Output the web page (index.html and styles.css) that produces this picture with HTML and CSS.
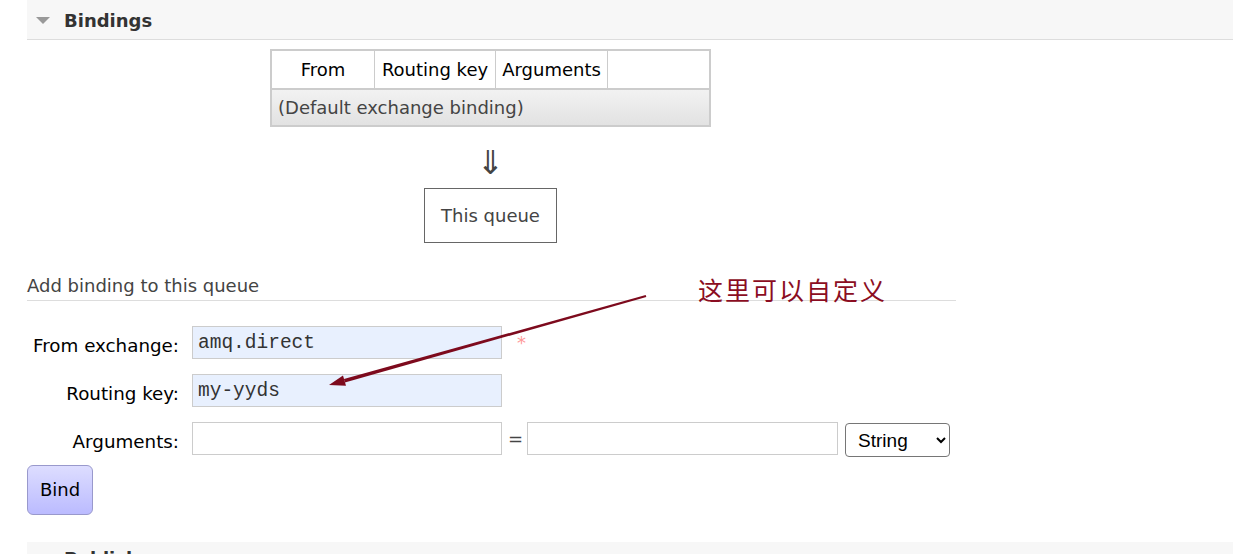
FILE: index.html
```html
<!DOCTYPE html>
<html lang="en">
<head>
<meta charset="utf-8">
<title>Bindings</title>
<link rel="stylesheet" href="styles.css">
</head>
<body>
<div class="page">
  <section class="section">
    <h2 class="section-header"><span class="toggle"></span>Bindings</h2>
    <div class="section-body">
      <div class="diagram">
        <table class="bindings">
          <thead>
            <tr>
              <th class="c-from">From</th>
              <th class="c-key">Routing key</th>
              <th class="c-args">Arguments</th>
              <th class="c-act"></th>
            </tr>
          </thead>
          <tbody>
            <tr><td colspan="4">(Default exchange binding)</td></tr>
          </tbody>
        </table>
        <div class="flow-arrow">&#x21D3;</div>
        <div class="queue-box">This queue</div>
      </div>

      <h3 class="sub-title">Add binding to this queue</h3>
      <form class="bind-form">
        <div class="form-row">
          <label class="form-label">From exchange:</label>
          <input class="field filled" type="text" value="amq.direct">
          <span class="mand">*</span>
        </div>
        <div class="form-row">
          <label class="form-label">Routing key:</label>
          <input class="field filled" type="text" value="my-yyds">
        </div>
        <div class="form-row">
          <label class="form-label">Arguments:</label>
          <input class="field" type="text" value="">
          <span class="eq">=</span>
          <input class="field field-wide" type="text" value="">
          <select class="type-select">
            <option>String</option>
            <option>Number</option>
            <option>Boolean</option>
            <option>List</option>
          </select>
        </div>
        <button class="bind-btn" type="button">Bind</button>
      </form>
    </div>
  </section>
  <section class="section next-section">
    <h2 class="section-header next-header"><span class="toggle"></span>Publish message</h2>
  </section>
</div>

<div class="note">这里可以自定义</div>
<svg class="note-arrow" width="1233" height="554" viewBox="0 0 1233 554" aria-hidden="true">
  <polygon points="646.3,296.9 645.7,295.1 343.9,379.0 344.9,382.4" fill="#7d0a1d"/>
  <polygon points="329,385 343.0,375.6 346.0,385.8" fill="#7d0a1d"/>
</svg>
</body>
</html>
```

FILE: styles.css
```css
html {
  overflow: hidden;
}

body {
  margin: 0;
  font-family: "DejaVu Sans", Verdana, sans-serif;
  font-size: 18px;
  color: #444;
  background: #fff;
}

.page {
  margin-top: -5px;
  padding-left: 27px;
}

.section-header {
  display: flex;
  align-items: center;
  margin: 0;
  padding: 15px 0 8px 9px;
  background: #f7f7f7;
  border-bottom: 1px solid #ddd;
  font-size: 18px;
  line-height: 21px;
  font-weight: bold;
  color: #333;
}

.next-header {
  padding-top: 6px;
}

.toggle {
  width: 0;
  height: 0;
  border-left: 7px solid transparent;
  border-right: 7px solid transparent;
  border-top: 7px solid #999;
  margin: 0 14px 0 0;
}

.section-body {
  width: 929px;
}

.diagram {
  width: 927px;
  display: flex;
  flex-direction: column;
  align-items: center;
  padding-top: 9px;
}

.bindings {
  border-collapse: separate;
  border-spacing: 0;
  border: 2px solid #ccc;
  table-layout: fixed;
  width: 441px;
}

.bindings th {
  font-weight: normal;
  color: #000;
  background: #fff;
  padding: 8px 0;
  line-height: 21px;
  text-align: center;
  border-right: 1px solid #ccc;
  border-bottom: 2px solid #ccc;
  white-space: nowrap;
}

.bindings th.c-act {
  border-right: none;
}

.c-from { width: 102px; }
.c-key { width: 120px; }
.c-args { width: 111px; }

.bindings td {
  padding: 7px 6px;
  line-height: 21px;
  color: #444;
  background: linear-gradient(#f2f2f2, #e2e2e2);
}

.flow-arrow {
  height: 61px;
  box-sizing: border-box;
  padding-top: 18px;
  font-size: 33px;
  line-height: 36px;
  color: #444;
}

.queue-box {
  border: 1px solid #666;
  padding: 16px;
  line-height: 21px;
  color: #444;
}

.sub-title {
  margin: 32px 0 0;
  padding-bottom: 4px;
  font-size: 18px;
  font-weight: normal;
  line-height: 21px;
  color: #444;
  border-bottom: 1px solid #ddd;
}

.bind-form {
  margin-top: 25px;
  display: flex;
  flex-direction: column;
  align-items: flex-start;
  gap: 15px;
}

.form-row {
  display: flex;
  align-items: flex-start;
}

.form-label {
  width: 152px;
  margin-right: 13px;
  text-align: right;
  color: #000;
  font-size: 18.3px;
  line-height: 21px;
  padding-top: 9px;
  white-space: nowrap;
}

.field {
  box-sizing: border-box;
  width: 310px;
  height: 33px;
  margin: 0;
  padding: 0 5px;
  border: 1px solid #ccc;
  border-radius: 0;
  background: #fff;
  font-family: "Liberation Mono", "Courier New", monospace;
  font-size: 19.5px;
  color: #333;
  outline: none;
}

.field.filled {
  background: #e8f0fe;
}

.field-wide {
  width: 311px;
}

.mand {
  margin-left: 15px;
  padding-top: 6px;
  color: #f99;
  font-size: 18px;
  line-height: 21px;
}

.eq {
  margin: 0 4px 0 6px;
  line-height: 21px;
  padding-top: 6px;
  color: #444;
}

.type-select {
  box-sizing: border-box;
  width: 105px;
  height: 34px;
  margin: 1px 0 0 7px;
  padding: 0 0 0 8px;
  border: 1px solid #767676;
  border-radius: 4px;
  background: #fff;
  font-family: "Liberation Sans", Arial, sans-serif;
  font-size: 19px;
  color: #000;
}

.bind-btn {
  margin-top: -7px;
  padding: 13px 12px 14px;
  border: 1px solid #99c;
  border-radius: 6px;
  background: linear-gradient(#ddddff, #bbbbff);
  font-family: "DejaVu Sans", Verdana, sans-serif;
  font-size: 18px;
  line-height: 21px;
  color: #000;
  cursor: pointer;
}

.next-section {
  margin-top: 27px;
}

.note {
  position: absolute;
  left: 698px;
  top: 272px;
  font-family: "Noto Sans CJK SC", sans-serif;
  font-size: 25px;
  line-height: 34px;
  letter-spacing: 2px;
  color: #8b0d22;
}

.note-arrow {
  position: absolute;
  left: 0;
  top: 0;
  pointer-events: none;
}
```
